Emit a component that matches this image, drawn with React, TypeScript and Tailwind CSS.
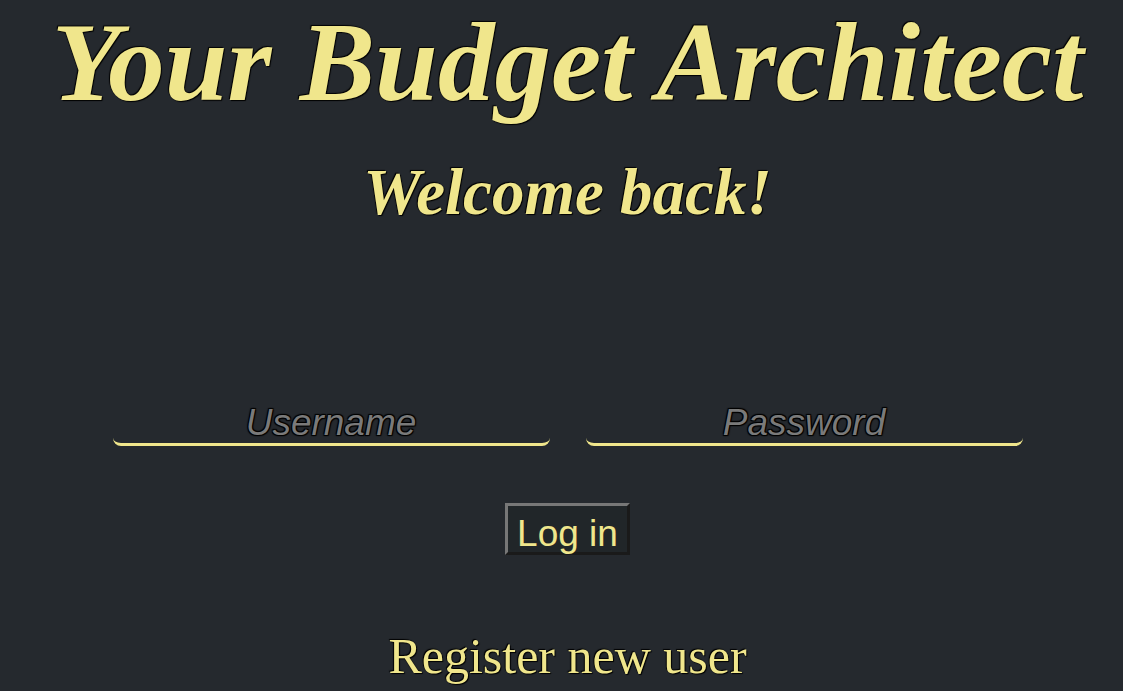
import React from "react";

const serif = { fontFamily: '"Liberation Serif", "DejaVu Serif", serif' };

export default function App() {
  return (
    <div className="min-h-screen w-full bg-[#25292e] flex flex-col items-center pl-[12px] text-[#f0e68c] overflow-hidden">
      <h1 className="font-['Liberation_Serif',serif] italic font-bold text-[113px] leading-[1.1] [text-shadow:1px_1px_1px_#000,-1px_-1px_1px_#000]">
        Your Budget Architect
      </h1>
      <h2 className="font-['Liberation_Serif',serif] italic font-bold text-[65px] leading-none mt-[36px] [text-shadow:1px_1px_1px_#000,-1px_-1px_1px_#000]">
        Welcome back!
      </h2>

      <form className="flex flex-col items-center w-full mt-[176px]">
        <div className="flex gap-[36px]">
          <input
            type="text"
            placeholder="Username"
            className="w-[437px] h-[45px] bg-transparent text-center italic text-[37px] font-['Liberation_Sans',sans-serif] text-[#f0e68c] border-b-[3px] border-[#f0e68c] rounded-b-[8px] outline-none placeholder:text-[#7a7a7a] placeholder:[text-shadow:1px_1px_1px_#000,-1px_-1px_1px_#000,1px_-1px_1px_#000,-1px_1px_1px_#000]"
          />
          <input
            type="password"
            placeholder="Password"
            className="w-[437px] h-[45px] bg-transparent text-center italic text-[37px] font-['Liberation_Sans',sans-serif] text-[#f0e68c] border-b-[3px] border-[#f0e68c] rounded-b-[8px] outline-none placeholder:text-[#7a7a7a] placeholder:[text-shadow:1px_1px_1px_#000,-1px_-1px_1px_#000,1px_-1px_1px_#000,-1px_1px_1px_#000]"
          />
        </div>
        <button
          type="button"
          className="mt-[57px] w-[125px] h-[52px] p-0 bg-[#212629] text-[37px] font-['Liberation_Sans',sans-serif] text-[#f0e68c] border-[3px] border-t-[#777] border-l-[#777] border-b-[#1a1a1a] border-r-[#1a1a1a]"
        >
          Log in
        </button>
      </form>

      <a
        href="#"
        style={serif}
        className="mt-[76px] text-[50px] leading-none text-[#f0e68c] [text-shadow:1px_1px_1px_#000,-1px_-1px_1px_#000]"
      >
        Register new user
      </a>
    </div>
  );
}
